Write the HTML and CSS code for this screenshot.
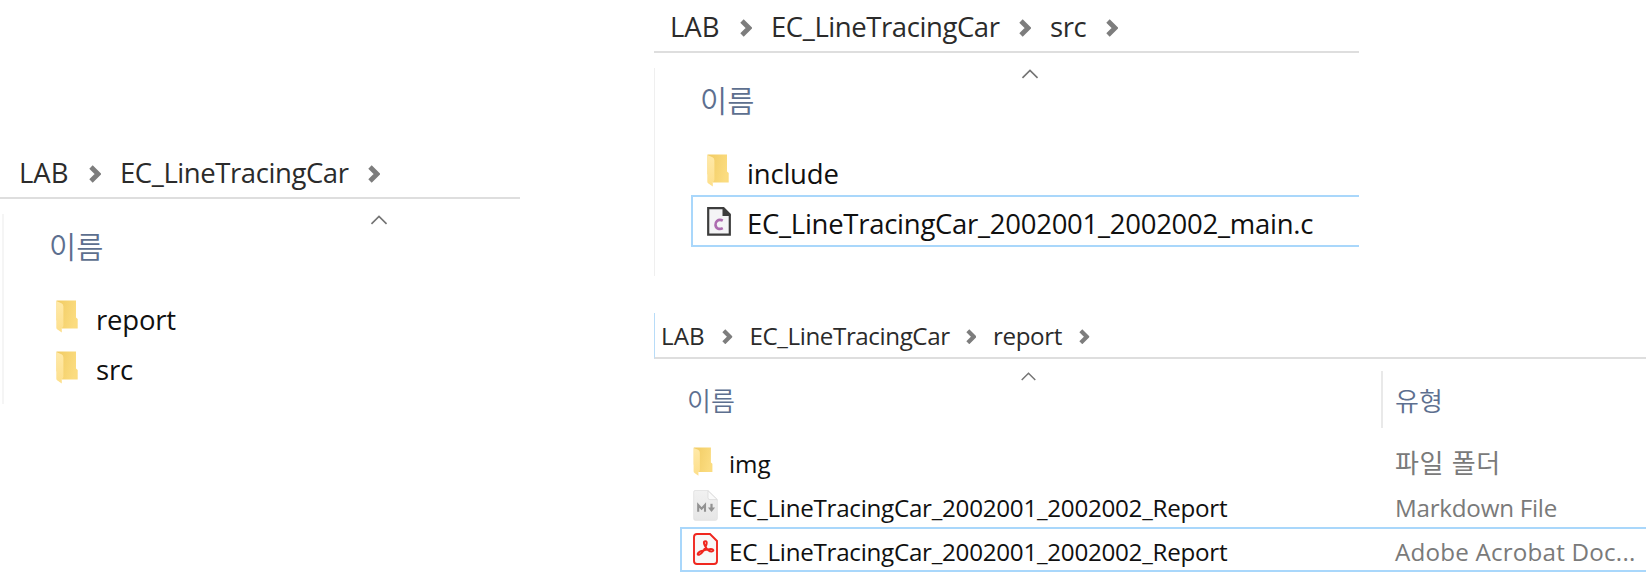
FILE: index.html
```html
<!DOCTYPE html>
<html lang="ko">
<head>
<meta charset="utf-8">
<title>LAB</title>
<link rel="stylesheet" href="styles.css">
</head>
<body>
<svg class="defs" width="0" height="0" aria-hidden="true">
  <defs>
    <linearGradient id="fold-back" x1="0" y1="0" x2="1" y2="0.3"><stop offset="0" stop-color="#f1cb62"/><stop offset="1" stop-color="#fbdc80"/></linearGradient>
    <linearGradient id="fold-front" x1="0" y1="0" x2="0" y2="1"><stop offset="0" stop-color="#ffe9a8"/><stop offset="1" stop-color="#fddf8b"/></linearGradient>
    <linearGradient id="paper" x1="0" y1="0" x2="0" y2="1"><stop offset="0" stop-color="#f1f1f1"/><stop offset="1" stop-color="#e6e6e6"/></linearGradient>
    <symbol id="folder" viewBox="0 0 22 33"><path d="M0.5 0.5H20V17.5L21.7 19V28.5H6L0.5 20Z" fill="url(#fold-back)"/><path d="M0.3 1L5.5 3.2Q7.4 4.2 7.4 6.5V25.5Q7.4 27.5 5.8 28V32.6L1.4 29.6Q0.3 28.8 0.3 27.5Z" fill="url(#fold-front)"/></symbol>
    <symbol id="chev" viewBox="0 0 12 18"><path d="M2 2L9 9L2 16" fill="none" stroke="#7d7d7d" stroke-width="4.8"/></symbol>
    <symbol id="caret" viewBox="0 0 18 11"><path d="M0.7 9.7L9 1.5L17.3 9.7" fill="none" stroke="#747474" stroke-width="1.8"/></symbol>
  </defs>
</svg>
<main class="page">
  <section class="panel panel-root">
    <nav class="crumbs"><span class="crumb lab">LAB</span><svg class="chev"><use href="#chev"/></svg><span class="crumb car">EC_LineTracingCar</span><svg class="chev"><use href="#chev"/></svg></nav>
    <div class="body">
      <div class="head"><svg class="caret"><use href="#caret"/></svg><span class="label">이름</span></div>
      <div class="row"><svg class="folder"><use href="#folder"/></svg><span class="name tight">report</span></div>
      <div class="row last"><svg class="folder"><use href="#folder"/></svg><span class="name tight">src</span></div>
    </div>
  </section>
  <div class="column">
    <section class="panel panel-src">
      <nav class="crumbs"><span class="crumb lab">LAB</span><svg class="chev"><use href="#chev"/></svg><span class="crumb car">EC_LineTracingCar</span><svg class="chev"><use href="#chev"/></svg><span class="crumb src">src</span><svg class="chev"><use href="#chev"/></svg></nav>
      <div class="body">
        <div class="head"><svg class="caret"><use href="#caret"/></svg><span class="label">이름</span></div>
        <div class="row"><svg class="folder"><use href="#folder"/></svg><span class="name tight">include</span></div>
        <div class="row last selected">
          <svg class="file-c" viewBox="0 0 24 29"><path d="M1.2 1.2H16.5L22.8 7.5V27.6H1.2Z" fill="#f4f4f6" stroke="#3d3d3d" stroke-width="2.2"/><path d="M15.5 0.5L23.8 9H15.5Z" fill="#3d3d3d"/><path d="M15.8 13.7Q12.5 12 10 14Q8.3 15.6 8.5 18Q8.8 20.8 11.2 21.7Q13.5 22.3 15.8 21.1" fill="none" stroke="#ad6cb0" stroke-width="2.6"/></svg>
          <span class="name long">EC_LineTracingCar_2002001_2002002_main.c</span>
        </div>
      </div>
    </section>
    <section class="panel panel-report">
      <nav class="crumbs"><span class="crumb lab">LAB</span><svg class="chev"><use href="#chev"/></svg><span class="crumb car">EC_LineTracingCar</span><svg class="chev"><use href="#chev"/></svg><span class="crumb rep">report</span><svg class="chev"><use href="#chev"/></svg></nav>
      <div class="table">
        <div class="thead">
          <div class="head"><svg class="caret"><use href="#caret"/></svg><span class="label">이름</span></div>
          <div class="type-head">유형</div>
        </div>
        <div class="row"><svg class="folder"><use href="#folder"/></svg><span class="name">img</span><span class="type ko">파일 폴더</span></div>
        <div class="row">
          <svg class="file-md" viewBox="0 0 25 31"><path d="M2 0.5H15L24.3 9.5V28.5Q24.3 30.3 22.5 30.3H2.3Q0.7 30.3 0.7 28.7V2Q0.7 0.5 2 0.5Z" fill="url(#paper)" stroke="#e0e0e0" stroke-width="0.8"/><path d="M15 0.8V7.8Q15 9.6 17 9.6H24.2Z" fill="#fafafa" stroke="#d9d9d9" stroke-width="0.8"/><path d="M5.2 21.7V15L8.6 18.8L12 15V21.7" fill="none" stroke="#929292" stroke-width="2.1"/><path d="M18.5 13.8V18.5" stroke="#929292" stroke-width="2.2"/><path d="M14.9 17.5H22.1L18.5 22Z" fill="#929292"/></svg>
          <span class="name long">EC_LineTracingCar_2002001_2002002_Report</span><span class="type">Markdown File</span>
        </div>
        <div class="row selected">
          <svg class="file-pdf" viewBox="0 0 25 32"><path d="M4 1H17L24 8V28Q24 31 21 31H4Q1 31 1 28V4Q1 1 4 1Z" fill="#f8f8f8" stroke="#f0271f" stroke-width="1.9"/><path d="M12.3 8.2C10.2 8.2 10.8 11 12.2 13.2C13.8 16.3 16.7 18.5 18.8 18.4C21.3 18.1 20.5 15.9 18 15.9C14.6 15.9 10.5 17 7.2 18.5C3.9 20 4.2 22.2 6.1 21.8C8.9 21.2 12.6 15.2 13.5 11.2C14 9.2 13.6 8.2 12.3 8.2Z" fill="none" stroke="#f0271f" stroke-width="2"/></svg>
          <span class="name long">EC_LineTracingCar_2002001_2002002_Report</span><span class="type adobe">Adobe Acrobat Doc...</span>
        </div>
      </div>
    </section>
  </div>
</main>
</body>
</html>
```
FILE: styles.css
```css
* { box-sizing: border-box; }
body { margin: 0; background: #fff; color: #161616; font: 370 27.5px "Open Sans", "Noto Sans CJK KR", sans-serif; }
svg { display: block; flex: none; }
.defs { position: absolute; }
.page { display: flex; width: 1646px; height: 585px; overflow: hidden; }
.panel-root { width: 520px; margin: 146px 134px 0 0; }
.column { width: 992px; }
.panel-src { width: 705px; }

.crumbs { display: flex; align-items: center; height: 53px; padding-left: 16px; border-bottom: 2px solid #dedede; color: #2b2b2b; white-space: nowrap; }
.panel-root .crumbs { padding-left: 19px; }
.panel-root .body .caret { margin-left: 321px; }
.crumb { line-height: 48px; padding-top: 3px; }
.lab { width: 70px; }
.car { width: 248px; letter-spacing: -0.42px; }
.src { width: 56px; letter-spacing: -0.4px; }
.chev { width: 12px; height: 18px; margin: 4px 19px 0 0; }
.src + .chev { margin-right: 0; }

.body { height: 208px; margin-top: 15px; border-left: 1px solid #efefef; }
.panel-root .body { height: 190px; margin-left: 2px; border-left: 2px solid #f5f5f5; }
.head { height: 77px; padding: 1px 0 0 45px; color: #5d6f8f; }
.caret { width: 18px; height: 10px; margin-left: 321px; }
.label { display: block; margin-top: 7px; font-size: 29.5px; font-weight: 350; line-height: 30px; }
.row { display: flex; align-items: center; height: 50px; margin-left: 36px; border: 0 solid transparent; border-left-width: 2px; padding-left: 14px; white-space: nowrap; color: #101010; }
.row.last { height: 52px; border-width: 2px 0 2px 2px; }
.folder { width: 22px; height: 33px; }
.name { margin-left: 18px; padding-top: 7px; line-height: 36px; }
.last .name { padding-top: 5px; }
.tight { letter-spacing: -0.2px; }
.selected, .row.last.selected { border-color: #a9d7fb; }
.file-c { width: 24px; height: 29px; }
.file-c + .name { margin-left: 16px; }
.long { letter-spacing: -0.27px; }

.panel-report { margin-top: 37px; font-size: 24.2px; }
.panel-report .crumbs { height: 46px; padding-left: 6px; border-left: 1px solid #b8dcf8; }
.panel-report .crumb { line-height: 42px; padding-top: 2px; }
.panel-report .lab { width: 61px; }
.panel-report .car { width: 216px; }
.panel-report .rep { width: 86px; letter-spacing: -0.4px; }
.panel-report .chev { width: 10.5px; height: 15.5px; margin: 3px 17px 0 0; }
.thead { display: flex; height: 81px; padding-top: 12px; }
.thead .head { width: 727px; height: 57px; padding: 1px 0 0 33px; }
.thead .caret { width: 15px; height: 9px; margin-left: 334px; }
.thead .label { margin-top: 5px; font-size: 26px; }
.type-head { height: 57px; width: 200px; padding: 15px 0 0 12px; border-left: 2px solid #e9e9e9; color: #5d6f8f; font-size: 26px; font-weight: 350; line-height: 30px; }
.panel-report .row { height: 43.5px; margin-left: 26px; padding-left: 11px; }
.panel-report .row.selected { height: 45px; border-width: 2px 0 2px 2px; padding-left: 11px; }
.panel-report .folder { width: 20px; height: 29px; }
.panel-report .name { width: 666px; margin-left: 16px; padding-top: 5px; line-height: 32px; }
.file-md { width: 25px; height: 31px; }
.file-pdf { width: 25px; height: 32px; margin-top: -2px; }
.panel-report .file-md + .name, .panel-report .file-pdf + .name { margin-left: 11px; }
.type { padding-top: 5px; line-height: 32px; color: #7a7a7a; letter-spacing: -0.25px; }
.ko { font-size: 26px; letter-spacing: 0.7px; padding-top: 3px; }
.adobe { letter-spacing: 0.2px; }
```
